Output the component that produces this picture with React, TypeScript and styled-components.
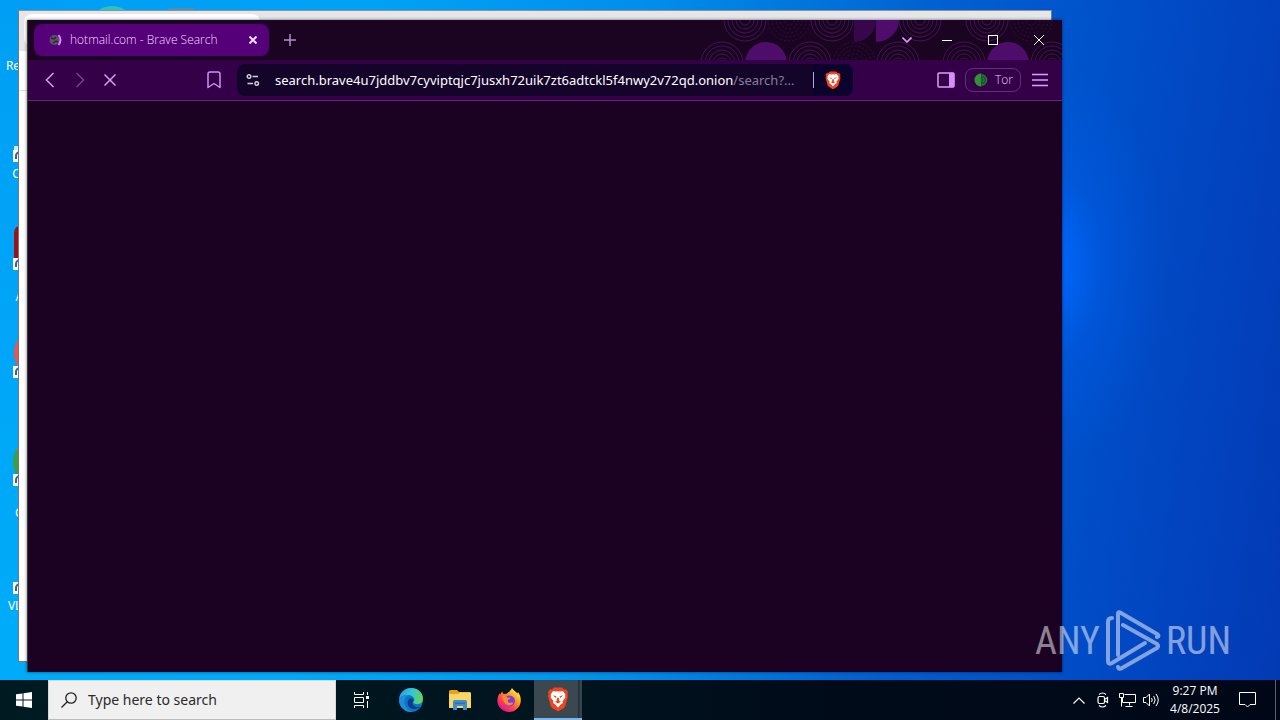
import React from "react";
import styled, { createGlobalStyle } from "styled-components";

const GlobalStyle = createGlobalStyle`
  *, *::before, *::after { box-sizing: border-box; }
  body { margin: 0; font-family: "Noto Sans", "Open Sans", sans-serif; }
  button, input { font: inherit; color: inherit; border: 0; padding: 0; margin: 0; background: none; }
  ul { list-style: none; margin: 0; padding: 0; }
  svg { display: block; flex: none; }
`;

const Screen = styled.div`
  min-height: 100vh;
  display: flex;
  flex-direction: column;
  overflow: hidden;
`;

const Desktop = styled.main`
  position: relative;
  flex: 1;
  display: flex;
  overflow: hidden;
  background:
    radial-gradient(ellipse 110px 200px at 1055px 265px, rgba(0, 104, 255, 0.95), rgba(0, 96, 240, 0.35) 45%, transparent),
    radial-gradient(ellipse 900px 680px at 0 100%, rgba(0, 190, 255, 0.4), transparent),
    linear-gradient(97deg, #009ff5 0%, #00a2f6 28%, #008eea 48%, #0062d2 68%, #0050ca 82%, #0244c0 91%, #033ab4 100%);
`;

const IconColumn = styled.ul`
  width: 75px;
  padding-top: 6px;
`;

const Shortcut = styled.li`
  height: 108px;
  display: flex;
  flex-direction: column;
  align-items: center;
  gap: 4px;
  color: #fff;
  font-size: 12px;
  line-height: 15px;
  text-align: center;
  white-space: nowrap;
`;

const BackWindow = styled.section`
  position: absolute;
  inset: 10px 228px 18px 18px;
  background: #fff;
  border: 1px solid #707880;
  border-top-color: #8b9299;
`;

const BackTabs = styled.div`
  height: 40px;
  padding: 3px 0 0 5px;
  background: #e6e6e8;
`;

const BackTab = styled.div`
  width: 236px;
  height: 32px;
  border-radius: 8px;
  background: #fff;
`;

const BackToolbar = styled.div`
  height: 40px;
  border-bottom: 1px solid #dde0e8;
`;

const BrowserWindow = styled.section`
  position: absolute;
  inset: 20px 218px 8px 27px;
  display: flex;
  flex-direction: column;
  background: #1b0222;
  border-left: 1px solid #3b3a30;
  box-shadow: 0 0 3px rgba(0, 10, 40, 0.6);
`;

const TitleBar = styled.header`
  position: relative;
  height: 40px;
  display: flex;
  align-items: center;
  padding-left: 6px;
  background: #1b0422;
`;

const TitlePattern = styled.svg`
  position: absolute;
  top: 0;
  right: 0;
`;

const Tab = styled.div`
  width: 235px;
  height: 32px;
  display: flex;
  align-items: center;
  gap: 6px;
  padding: 0 8px 0 14px;
  border-radius: 8px;
  background: #550078;
  color: #f3dcff;
  font-family: "Open Sans", "Noto Sans", sans-serif;
  font-size: 12px;
  font-weight: 300;
  line-height: 16px;
`;

const TabTitle = styled.span`
  flex: 1;
  white-space: nowrap;
`;

const IconButton = styled.button<{ $w?: number; $h?: number }>`
  width: ${(p) => p.$w ?? 30}px;
  height: ${(p) => p.$h ?? 30}px;
  flex: none;
  display: flex;
  align-items: center;
  justify-content: center;
`;

const WindowButtons = styled.div`
  position: relative;
  margin-left: auto;
  display: flex;
`;

const Toolbar = styled.nav`
  height: 41px;
  display: grid;
  grid-template-columns: 209px minmax(0, 1fr) 209px;
  align-items: center;
  background: #340048;
  border-bottom: 1px solid #5a2c70;
`;

const NavButtons = styled.div`
  display: flex;
  padding: 0 8px 0 7px;
  justify-content: space-between;
`;

const Group = styled.div`
  display: flex;
`;

const AddressBar = styled.div`
  height: 32px;
  display: flex;
  align-items: center;
  overflow: hidden;
  border-radius: 8px;
  background: #14042a;
  color: #fff;
  font-size: 13px;
  line-height: 20px;
`;

const AddressInput = styled.input`
  field-sizing: content;
  min-width: 0;
  height: 20px;
  margin-left: 6px;
  outline: 0;
`;

const AddressPath = styled.span`
  flex: 1;
  color: #8a7c9c;
  white-space: nowrap;
`;

const ShieldButton = styled(IconButton)`
  position: relative;
  background: #0c032c;
  &::before {
    content: "";
    position: absolute;
    left: 0;
    top: 8px;
    width: 1px;
    height: 16px;
    background: #b8a8cc;
  }
`;

const ToolbarEnd = styled.div`
  display: flex;
  align-items: center;
  justify-content: flex-end;
  padding-right: 7px;
`;

const TorButton = styled.button`
  width: 56px;
  height: 24px;
  margin: 0 4px;
  padding: 0 7px 0 8px;
  display: flex;
  align-items: center;
  justify-content: space-between;
  border: 1px solid #5f3278;
  border-radius: 8px;
  color: #ecc8ff;
  font-family: "Open Sans", "Noto Sans", sans-serif;
  font-size: 12px;
  font-weight: 300;
  line-height: 16px;
`;

const Watermark = styled.div`
  position: absolute;
  right: 49px;
  bottom: 8px;
  display: flex;
  align-items: center;
  gap: 5px;
  color: #fff;
  opacity: 0.5;
  font-family: "Roboto Condensed", "Liberation Sans Narrow", "Liberation Sans", sans-serif;
  font-size: 38px;
  line-height: 60px;
  pointer-events: none;
`;

const Taskbar = styled.footer`
  height: 40px;
  display: flex;
  background: linear-gradient(90deg, #001a22 0%, #00141e 45%, #000c1a 60%, #000818 100%);
  color: #fff;
`;

const SearchBox = styled.label`
  width: 288px;
  display: flex;
  align-items: center;
  gap: 11px;
  padding: 0 12px;
  background: #f0f0f0;
  border: 1px solid #d8d8d4;
  border-bottom-color: #bbb;
  color: #222;
`;

const SearchInput = styled.input`
  flex: 1;
  min-width: 0;
  outline: 0;
  font-size: 14px;
  line-height: 20px;
  &::placeholder { color: #2a2a2a; opacity: 1; }
`;

const TaskButtons = styled.div`
  display: flex;
  gap: 1px;
`;

const TaskButton = styled.button<{ $w?: number; $active?: boolean }>`
  width: ${(p) => p.$w ?? 48}px;
  height: 40px;
  display: flex;
  align-items: center;
  justify-content: center;
  background: ${(p) => (p.$active ? "linear-gradient(90deg, #3c484f 44px, #1b272e 44px, #37434a 46px)" : "none")};
  border-bottom: ${(p) => (p.$active ? "2px solid #76b9ed" : "0")};
`;

const Tray = styled.div`
  margin-left: auto;
  display: flex;
  align-items: center;
`;

const Clock = styled.button`
  width: 64px;
  height: 40px;
  font-family: "Open Sans", "Noto Sans", sans-serif;
  font-size: 12px;
  line-height: 18px;
  text-align: center;
  white-space: nowrap;
`;

const ShowDesktop = styled.button`
  width: 5px;
  height: 40px;
  margin-left: 8px;
  border-left: 1px solid #59616a;
`;

const Badge = () => (
  <g>
    <rect x="0" y="36" width="12" height="12" fill="#fff" />
    <path d="M3 45v-3a4 4 0 0 1 4-4h3" stroke="#3a5c9c" strokeWidth="2" fill="none" />
  </g>
);

const ShortcutIcon = ({ kind }: { kind: string }) => (
  <svg width="49" height="48" viewBox="0 0 49 48" aria-hidden="true">
    {kind === "cleaner" && <path d="M1 32h12v4H1z" fill="#d5e8f2" />}
    {kind === "acrobat" && <rect x="1" y="3" width="46" height="42" rx="8" fill="#9c1218" />}
    {kind === "firefox" && <circle cx="25" cy="23" r="24" fill="#f0544c" />}
    {kind === "chrome" && (
      <>
        <circle cx="24" cy="24" r="24" fill="#3f9e45" />
        <path d="M3.200 12A24 24 0 0 1 44.800 12H24L10 17z" fill="#cf6b3c" />
      </>
    )}
    {kind === "edge" && <circle cx="24" cy="24" r="24" fill="#2cc3c4" />}
    {kind === "device" && <rect x="4" y="2" width="28" height="40" rx="4" fill="#4d8fb8" />}
    {["cleaner", "acrobat", "firefox", "chrome", "vlc"].includes(kind) && <Badge />}
  </svg>
);

const Rings = ({ x, y, dim }: { x: number; y: number; dim?: boolean }) => (
  <g
    fill="none"
    stroke={dim ? "#31103b" : "#401650"}
    strokeWidth="1"
    strokeDasharray={dim ? "2 2" : undefined}
  >
    {[21, 17, 13, 9, 5].map((r) => (
      <circle key={r} cx={x} cy={y} r={r} />
    ))}
  </g>
);

const Pattern = () => (
  <TitlePattern width="362" height="40" viewBox="0 0 362 40" aria-hidden="true">
    <Rings x={45} y={0} />
    <Rings x={89} y={0} dim />
    <Rings x={132} y={0} />
    <path d="M154 0h22a22 22 0 0 1-22 22z" fill="#36074a" />
    <path d="M176 0h23a23 22 0 0 1-23 22z" fill="#4f0d6b" />
    <Rings x={220} y={0} />
    <Rings x={287} y={0} />
    <Rings x={331} y={0} dim />
    <Rings x={22} y={43} />
    <circle cx="66" cy="43" r="21" fill="#4f0d6b" />
    <Rings x={110} y={43} />
    <Rings x={154} y={43} dim />
    <Rings x={198} y={43} />
    <Rings x={264} y={43} />
    <circle cx="308" cy="43" r="21" fill="#4f0d6b" />
    <Rings x={352} y={43} />
  </TitlePattern>
);

const BraveLogo = ({ size }: { size: number }) => (
  <svg width={size} height={size} viewBox="0 0 24 24" aria-hidden="true">
    <path
      d="M8 .5h8l2 2 2-.2 2 2.600-.6 2 .6 2-2.600 9.500c-.4 1.500-1.200 2.300-2.200 3L12 24.500l-5.200-3.100c-1-.7-1.800-1.500-2.200-3L2 8.900l.6-2-.6-2 2-2.600 2 .2z"
      fill="#f4431c"
    />
    <path
      d="M12 4.200l2.200.4 2.700-.5 2.500 3.300-.4 1.600.5 1.300-3 4 .5 1.800-2.300 1.400L12 20.800l-2.700-3.300L7 16.100l.5-1.800-3-4L5 9l-.4-1.600 2.500-3.300 2.700.5z"
      fill="#fff"
    />
    <path
      d="M6.800 8.300l3.600 1-.6 1.700zM17.200 8.300l-3.600 1 .6 1.700zM11.200 10.500l-.5 3.500-1.700.7 3 1.800 3-1.800-1.700-.7-.5-3.500-.8.500z"
      fill="#f4431c"
    />
  </svg>
);

const EdgeLogo = () => (
  <svg width="24" height="24" viewBox="0 0 24 24" aria-hidden="true">
    <defs>
      <linearGradient id="edgeTop" x1="0" y1="0.300" x2="1" y2="0.500">
        <stop offset="0" stopColor="#2a9fe0" />
        <stop offset="0.500" stopColor="#31c6d4" />
        <stop offset="1" stopColor="#62d65a" />
      </linearGradient>
    </defs>
    <circle cx="12" cy="12" r="12" fill="#1173c8" />
    <path d="M.2 10.500C1.200 4.500 6 0 12 0c7 0 12 5 12 10.500 0 3.800-2.800 5.700-5.700 5.700-2.300 0-4.300-.8-4-1.900.2-.6 1-1 1-2.500C15.300 9.500 13 7 9 7 5.500 7 2 8 .2 10.500z" fill="url(#edgeTop)" />
    <path d="M9.500 7.200C6 9 4.800 12 5.500 15.500 6.300 19.500 9.500 23 14 23.800 8 25 1 20.500.1 13 0 9 5 6.500 9.500 7.200z" fill="#1b8fdb" />
    <path d="M9 12.500c-1.500 4 1.500 8.500 6 8.500 3 0 5.500-1.200 6.800-2.200-3.300 1-7.500.2-8.300-3.300-.3-1.200.9-1.700.9-3.300 0-1.200-1-1.900-2.200-1.900S9.700 11 9 12.500z" fill="#0a3f86" />
  </svg>
);

const FolderIcon = () => (
  <svg width="22" height="20" viewBox="0 0 22 20" aria-hidden="true">
    <path d="M0 1.500Q0 0 1.500 0H8l2 2h11v5H0z" fill="#e9a21c" />
    <path d="M0 4h9l2-1.500h11V18H0z" fill="#fbd665" />
    <path d="M4 20v-8.500Q4 10 5.500 10h11q1.500 0 1.500 1.500V20h-4v-4H8v4z" fill="#3b8fd0" />
    <path d="M6 12.500h10v1.500H6z" fill="#2a70b4" />
  </svg>
);

const FirefoxLogo = () => (
  <svg width="24" height="24" viewBox="0 0 24 24" aria-hidden="true">
    <defs>
      <linearGradient id="fox" x1="0.850" y1="0.100" x2="0.200" y2="0.900">
        <stop offset="0" stopColor="#fff14f" />
        <stop offset="0.350" stopColor="#ff9a1f" />
        <stop offset="0.700" stopColor="#ff4050" />
        <stop offset="1" stopColor="#e0168c" />
      </linearGradient>
    </defs>
    <path
      d="M15 0c1.500 2.500 4 3.500 5.500 5.500L21 4c1.800 2.500 2.800 5 2.800 8.200C23.800 18.800 18.500 24 12 24S.4 18.800.4 12.800c0-3.300 1.100-6 2.600-7.800l.2 1.500L5 3.500 6.500 6l3-.3c1.500-.5 4-3 5.500-5.700z"
      fill="url(#fox)"
    />
    <circle cx="12.500" cy="13" r="5.500" fill="#7a3fe0" />
    <path d="M5.500 8c2-.8 4 .2 5 1.700h3c-.3 1.500-2.300 1.500-2.700 2.500-.3 1.800 1 3 3 2.500 1.500-.4 2.200-.2 2.500.3-1 2-3.300 3-5.500 2.300C7.500 16.300 5.500 12 5.500 8z" fill="#ff8a2a" />
  </svg>
);

const line = { fill: "none", stroke: "currentColor" } as const;

const shortcuts = [
  { kind: "bin", label: ["Recycle Bin"] },
  { kind: "cleaner", label: ["CCleaner"] },
  { kind: "acrobat", label: ["Adobe", "Acrobat"] },
  { kind: "firefox", label: ["Firefox"] },
  { kind: "chrome", label: ["Google", "Chrome"] },
  { kind: "vlc", label: ["VLC media", "player"] },
];

export default function App() {
  return (
    <Screen>
      <GlobalStyle />
      <Desktop>
        <IconColumn>
          {shortcuts.map((s) => (
            <Shortcut key={s.kind}>
              <ShortcutIcon kind={s.kind} />
              <div>
                {s.label.map((part) => (
                  <div key={part}>{part}</div>
                ))}
              </div>
            </Shortcut>
          ))}
        </IconColumn>
        <IconColumn>
          <Shortcut>
            <ShortcutIcon kind="edge" />
          </Shortcut>
        </IconColumn>
        <IconColumn>
          <Shortcut>
            <ShortcutIcon kind="device" />
          </Shortcut>
        </IconColumn>

        <BackWindow>
          <BackTabs>
            <BackTab />
          </BackTabs>
          <BackToolbar />
        </BackWindow>

        <BrowserWindow>
          <TitleBar>
            <Pattern />
            <Tab>
              <svg width="16" height="16" viewBox="0 0 16 16" aria-hidden="true">
                <circle cx="6.500" cy="8" r="5" fill="#5d5266" />
                <path d="M3 6l3 1 2-2M5 11l3-2 2 1" stroke="#2c2434" strokeWidth="1.500" fill="none" />
                <path d="M10.500 3q4 5 0 10" stroke="#d58cff" strokeWidth="2" fill="none" />
              </svg>
              <TabTitle>hotmail.com - Brave Search</TabTitle>
              <IconButton $w={16} $h={16} aria-label="Close tab">
                <svg width="8" height="8" viewBox="0 0 8 8" {...line} strokeWidth="2">
                  <path d="M.5.5l7 7M7.500.5l-7 7" />
                </svg>
              </IconButton>
            </Tab>
            <IconButton $w={42} aria-label="New tab">
              <svg width="12" height="12" viewBox="0 0 12 12" fill="none" stroke="#b48cc6" strokeWidth="1.500">
                <path d="M6 0v12M0 6h12" />
              </svg>
            </IconButton>
            <WindowButtons>
              <IconButton $w={34} $h={40} aria-label="Search tabs">
                <svg width="10" height="6" viewBox="0 0 10 6" fill="none" stroke="#d9a0f6" strokeWidth="1.600">
                  <path d="M.5.5L5 5 9.500.5" />
                </svg>
              </IconButton>
              <IconButton $w={46} $h={40} aria-label="Minimize">
                <svg width="10" height="10" viewBox="0 0 10 10" fill="none" stroke="#fff">
                  <path d="M0 5.500h10" />
                </svg>
              </IconButton>
              <IconButton $w={46} $h={40} aria-label="Maximize">
                <svg width="10" height="10" viewBox="0 0 10 10" fill="none" stroke="#fff">
                  <rect x=".5" y=".5" width="9" height="9" />
                </svg>
              </IconButton>
              <IconButton $w={46} $h={40} aria-label="Close">
                <svg width="10" height="10" viewBox="0 0 10 10" fill="none" stroke="#fff">
                  <path d="M0 0l10 10M10 0L0 10" />
                </svg>
              </IconButton>
            </WindowButtons>
          </TitleBar>

          <Toolbar>
            <NavButtons>
              <Group>
                <IconButton aria-label="Back">
                  <svg width="16" height="16" viewBox="0 0 16 16" fill="none" stroke="#d9a0f6" strokeWidth="1.500">
                    <path d="M11.500 1L4.500 8l7 7" />
                  </svg>
                </IconButton>
                <IconButton aria-label="Forward">
                  <svg width="16" height="16" viewBox="0 0 16 16" fill="none" stroke="#744489" strokeWidth="1.500">
                    <path d="M4.500 1l7 7-7 7" />
                  </svg>
                </IconButton>
                <IconButton aria-label="Stop loading">
                  <svg width="12" height="12" viewBox="0 0 12 12" fill="none" stroke="#d9a0f6" strokeWidth="1.500">
                    <path d="M.5.5l11 11M11.500.5l-11 11" />
                  </svg>
                </IconButton>
              </Group>
              <IconButton aria-label="Bookmark">
                <svg width="14" height="18" viewBox="0 0 14 18" fill="none" stroke="#d48df5" strokeWidth="1.500" strokeLinejoin="round">
                  <path d="M1 3q0-2 2-2h8q2 0 2 2v13.500l-6-4-6 4z" />
                </svg>
              </IconButton>
            </NavButtons>
            <AddressBar>
              <IconButton $w={32} aria-label="Site information">
                <svg width="14" height="12" viewBox="0 0 14 12" fill="none" stroke="#d7cde0" strokeWidth="1.400">
                  <circle cx="3" cy="2.500" r="1.800" />
                  <path d="M6.500 2.500H12M1.500 9.500H7" />
                  <circle cx="10.700" cy="9.500" r="1.800" />
                </svg>
              </IconButton>
              <AddressInput
                aria-label="Address"
                defaultValue="search.brave4u7jddbv7cyviptqjc7jusxh72uik7zt6adtckl5f4nwy2v72qd.onion"
              />
              <AddressPath>/search?...</AddressPath>
              <ShieldButton $w={40} $h={32} aria-label="Brave Shields">
                <BraveLogo size={18} />
              </ShieldButton>
            </AddressBar>
            <ToolbarEnd>
              <IconButton aria-label="Sidebar">
                <svg width="18" height="16" viewBox="0 0 18 16">
                  <rect x="1" y="1" width="16" height="14" rx="1" fill="none" stroke="#d9a0f6" strokeWidth="1.500" />
                  <path d="M12 1h5v14h-5z" fill="#d98cff" />
                </svg>
              </IconButton>
              <TorButton>
                <svg width="14" height="14" viewBox="0 0 14 14" aria-hidden="true">
                  <circle cx="7" cy="7" r="6.500" fill="#1c5230" />
                  <path d="M7 .5a6.500 6.500 0 0 0 0 13z" fill="#358f3a" />
                  <path d="M8 2.500a4.500 4.500 0 0 1 0 9M8 5a2 2 0 0 1 0 4" fill="none" stroke="#2f7d38" />
                </svg>
                Tor
              </TorButton>
              <IconButton aria-label="Menu">
                <svg width="16" height="14" viewBox="0 0 16 14" fill="none" stroke="#d9a0f6" strokeWidth="1.400">
                  <path d="M0 1.500h16M0 7h16M0 12.500h16" />
                </svg>
              </IconButton>
            </ToolbarEnd>
          </Toolbar>
        </BrowserWindow>

        <Watermark>
          <span>ANY</span>
          <svg width="56" height="62" viewBox="0 0 56 62" fill="none" stroke="#fff" strokeWidth="4" strokeLinecap="round" strokeLinejoin="round" aria-hidden="true">
            <path d="M7 8q-4 0-4 4v39q0 4 4 2l33-20" />
            <path d="M13 45V4q0-3 3-1l36 21q3 2 0 3" />
            <path d="M18 15l34 19q2 2 0 4L17 58q-3 2-4-1" />
          </svg>
          <span>RUN</span>
        </Watermark>
      </Desktop>

      <Taskbar>
        <TaskButton aria-label="Start">
          <svg width="16" height="16" viewBox="0 0 16 16" fill="#fff">
            <path d="M0 2.300L6.500 1.400v6.100H0zM7.500 1.200L16 0v7.500H7.500zM0 8.500h6.500v6.100L0 13.700zM7.500 8.500H16V16l-8.500-1.200z" />
          </svg>
        </TaskButton>
        <SearchBox>
          <svg width="16" height="16" viewBox="0 0 16 16" {...line} strokeWidth="1.300">
            <circle cx="10" cy="6" r="5.200" />
            <path d="M6.300 9.700L.5 15.500" />
          </svg>
          <SearchInput type="text" placeholder="Type here to search" aria-label="Type here to search" />
        </SearchBox>
        <TaskButtons>
          <TaskButton $w={50} aria-label="Task view">
            <svg width="17" height="16" viewBox="0 0 17 16" fill="none" stroke="#fff">
              <path d="M1.500 0v2.500h9V0M1.500 16v-2.500h9V16M1.500 5.500h9v5h-9zM14.500 0v3M14.500 9v7" />
              <path d="M13 4h3v3h-3z" fill="#fff" stroke="none" />
            </svg>
          </TaskButton>
          <TaskButton aria-label="Microsoft Edge">
            <EdgeLogo />
          </TaskButton>
          <TaskButton aria-label="File Explorer">
            <FolderIcon />
          </TaskButton>
          <TaskButton aria-label="Firefox">
            <FirefoxLogo />
          </TaskButton>
          <TaskButton $active aria-label="Brave">
            <BraveLogo size={24} />
          </TaskButton>
        </TaskButtons>
        <Tray>
          <IconButton $w={24} aria-label="Show hidden icons">
            <svg width="12" height="7" viewBox="0 0 12 7" {...line} strokeWidth="1.200">
              <path d="M.5 6.500L6 1l5.500 5.500" />
            </svg>
          </IconButton>
          <IconButton $w={24} aria-label="Meet now">
            <svg width="12" height="16" viewBox="0 0 12 16" {...line} strokeWidth="1.200">
              <rect x="1" y="4.500" width="6.500" height="7" rx="1.500" />
              <path d="M7.500 7.500l3-2v5l-3-2M2 2.500Q5.500-.5 9 2.500M2 13.500q3.500 3 7 0" />
            </svg>
          </IconButton>
          <IconButton $w={24} aria-label="Network">
            <svg width="17" height="14" viewBox="0 0 17 14" {...line}>
              <path d="M5.500 1.500h11v8H3.500V5M10.500 9.500v3M6.500 13.500h7M.5.500h4v4h-4zM2.500 4.500v9" />
            </svg>
          </IconButton>
          <IconButton $w={24} aria-label="Volume">
            <svg width="17" height="14" viewBox="0 0 17 14" {...line}>
              <path d="M.5 4.500h2.500l3.500-3.500v12L3 9.500H.5zM8.500 5q1.500 2 0 4M10.700 3q3 4 0 8M13 1q4.500 6 0 12" />
            </svg>
          </IconButton>
          <Clock>
            9:27 PM
            <br />
            4/8/2025
          </Clock>
          <IconButton $w={40} aria-label="Notifications">
            <svg width="17" height="16" viewBox="0 0 17 16" {...line}>
              <path d="M.5.5h16v12H11l-2.500 2.500L6 12.500H.5z" />
            </svg>
          </IconButton>
          <ShowDesktop aria-label="Show desktop" />
        </Tray>
      </Taskbar>
    </Screen>
  );
}
